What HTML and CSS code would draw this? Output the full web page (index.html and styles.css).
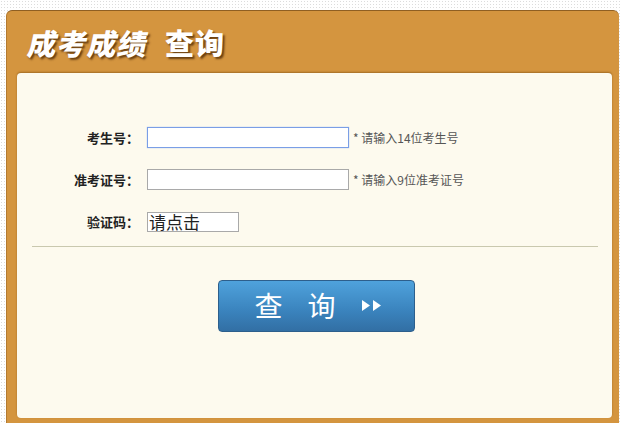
FILE: index.html
```html
<!DOCTYPE html>
<html lang="zh-CN">
<head>
    <meta charset="UTF-8">
    <title>成考成绩查询</title>
    <link rel="stylesheet" href="styles.css">
</head>
<body>

    <!-- Outer orange panel -->
    <div class="panel">
        <div class="panel-head">
            <h1 class="title"><span class="slant">成考成绩</span><span class="title-end">查询</span></h1>
        </div>

        <!-- Query form -->
        <div class="panel-body">
            <div class="form-row">
                <label class="form-label">考生号：</label>
                <input type="text" class="form-input focused">
                <span class="form-hint">* 请输入14位考生号</span>
            </div>
            <div class="form-row">
                <label class="form-label">准考证号：</label>
                <input type="text" class="form-input">
                <span class="form-hint">* 请输入9位准考证号</span>
            </div>
            <div class="form-row">
                <label class="form-label">验证码：</label>
                <div class="captcha">请点击</div>
            </div>

            <div class="divider"></div>

            <div class="button-row">
                <button class="query-button">
                    <span>查</span><span>询</span>
                    <svg class="arrows" width="22" height="13" viewBox="0 0 22 13">
                        <polygon points="1,1 9,6.5 1,12" fill="#fff"/>
                        <polygon points="12,1 20,6.5 12,12" fill="#fff"/>
                    </svg>
                </button>
            </div>
        </div>
    </div>

</body>
</html>
```

FILE: styles.css
```css
body {
    margin: 0;
    padding: 0;
    height: 423px;
    overflow: hidden;
    background-color: #fff;
    background-image: radial-gradient(#dcdcdc 0.8px, transparent 1px);
    background-size: 3px 3px;
    font-family: "Noto Sans CJK SC", "Noto Sans", sans-serif;
}

.panel {
    margin: 10px 2px 0 6px;
    height: 413px;
    box-sizing: border-box;
    padding: 0 7px 5px 10px;
    background-color: #d4953f;
    border-top: 1px solid #8f5f22;
    border-left: 1px solid #b37a30;
    border-radius: 6px 6px 0 0;
    display: flex;
    flex-direction: column;
}

.panel-head {
    height: 62px;
    display: flex;
    align-items: center;
    padding-left: 12px;
}

.title {
    margin: 0;
    color: #fff;
    font-size: 29px;
    font-weight: 900;
    letter-spacing: 1px;
    text-shadow: 2px 2px 2px rgba(70, 35, 0, 0.75);
    line-height: 1;
}

.slant {
    display: inline-block;
    transform: skewX(-12deg);
}

.title-end {
    margin-left: 16px;
}

.panel-body {
    flex: 1;
    background-color: #fdfaee;
    border-radius: 4px;
    box-shadow: 0 -1px 2px rgba(100, 55, 0, 0.45);
    padding-top: 54px;
}

.form-row {
    display: flex;
    align-items: center;
    height: 21px;
    margin-bottom: 21px;
}

.form-label {
    width: 122px;
    margin-right: 8px;
    text-align: right;
    font-size: 13px;
    font-weight: bold;
    color: #222;
}

.form-input {
    width: 202px;
    height: 21px;
    box-sizing: border-box;
    margin: 0;
    padding: 0 3px;
    border: 1px solid #a9a9a9;
    background-color: #fff;
    outline: none;
}

.form-input.focused {
    border-color: #7a9ee6;
    box-shadow: 0 0 1px #9bb8ef;
}

.form-hint {
    margin-left: 4px;
    font-size: 12px;
    color: #555;
}

.captcha {
    width: 92px;
    height: 20px;
    box-sizing: border-box;
    border: 1px solid #a9a9a9;
    background-color: #fff;
    font-size: 17px;
    line-height: 18px;
    padding-left: 1px;
    color: #222;
    overflow: visible;
}

.divider {
    height: 1px;
    background-color: #c9c8ae;
    margin: -7px 14px 0 15px;
}

.button-row {
    display: flex;
    justify-content: center;
    padding-left: 4px;
    margin-top: 33px;
}

.query-button {
    width: 197px;
    height: 52px;
    border: 1px solid #2d5f8c;
    border-radius: 4px;
    background: linear-gradient(to bottom, #4fa2dc, #3a83bd 60%, #326fa4);
    color: #fff;
    font-family: "Noto Sans CJK SC", sans-serif;
    font-size: 28px;
    display: flex;
    align-items: center;
    justify-content: center;
    gap: 25px;
    padding: 0 0 2px 4px;
    cursor: pointer;
}
```
